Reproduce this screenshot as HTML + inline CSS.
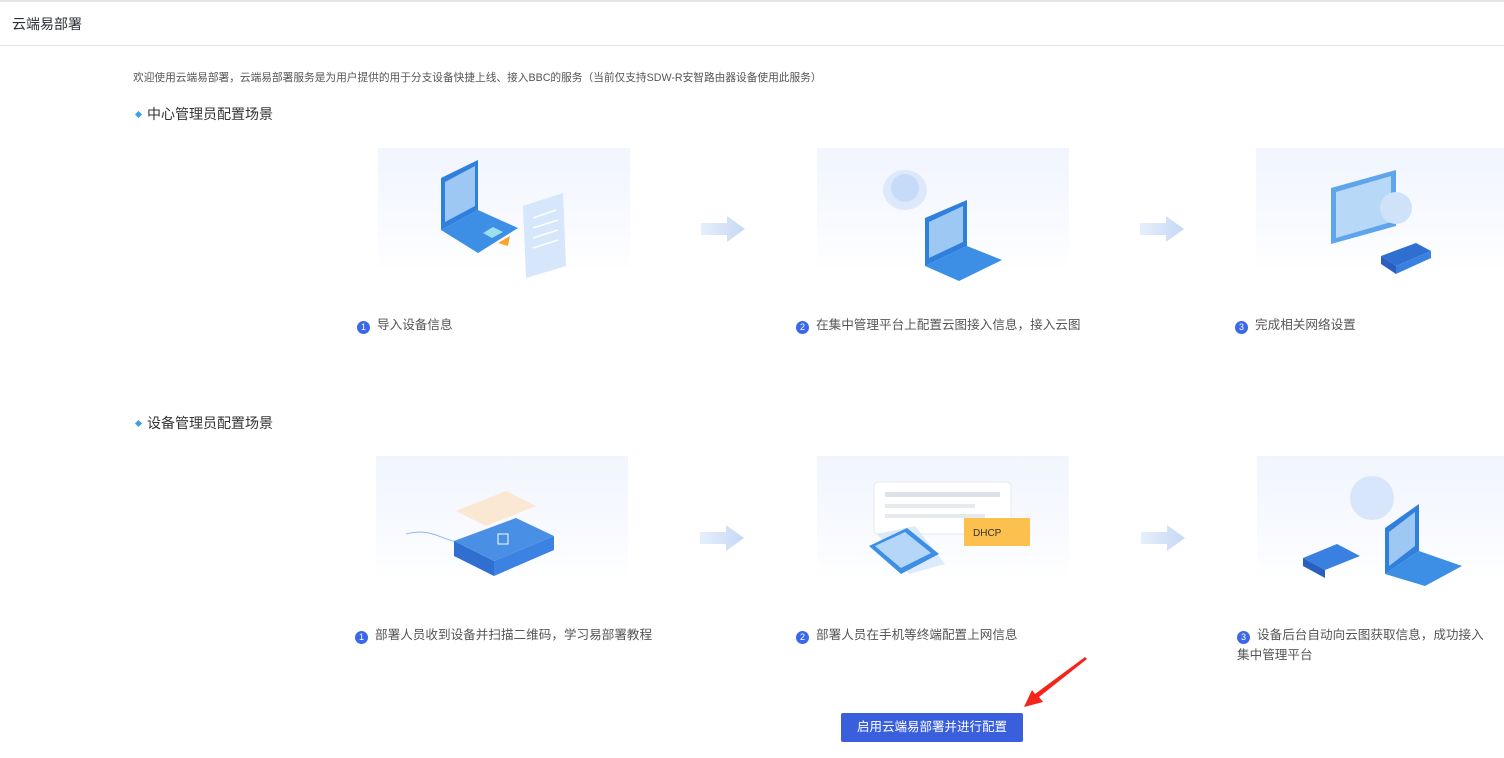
<!DOCTYPE html>
<html><head><meta charset="utf-8"><style>
*{margin:0;padding:0;box-sizing:border-box}
body{width:1504px;height:758px;background:#fff;font-family:"Liberation Sans","Noto Sans CJK SC",sans-serif;position:relative;overflow:hidden;color:#333}
.top{position:absolute;left:0;top:0;width:1504px;height:2px;background:#e4e6ea}
.hdr{position:absolute;left:0;top:2px;width:1504px;height:44px;border-bottom:1px solid #e2e4e8;font-size:14px;line-height:44px;padding-left:12px;color:#2b2f36}
.abs{position:absolute}
.intro{left:133px;top:70px;font-size:10.7px;color:#555;white-space:nowrap}
.sec{font-size:14px;color:#333}
.sec i{display:inline-block;width:5px;height:5px;background:#3aa0e8;transform:rotate(45deg);margin:0 6px 2px 3px;vertical-align:middle}
.panel{position:absolute;width:252px;height:124px;background:linear-gradient(180deg,#f1f5fd 0%,#f8faff 60%,#fff 100%)}
.step{position:absolute;font-size:12.6px;color:#555;line-height:20px}
.step b{display:inline-block;width:13px;height:13px;border-radius:50%;background:#3b68e8;color:#fff;font-size:9px;line-height:13px;text-align:center;font-weight:normal;margin-right:7px;vertical-align:-1px}
.arr{position:absolute;width:44px;height:26px}
.btn{position:absolute;left:841px;top:713px;width:182px;height:29px;background:#3a5fdc;color:#fff;font-size:12.5px;text-align:center;line-height:29px;border-radius:2px}
</style></head><body>
<div class="top"></div>
<div class="hdr">云端易部署</div>
<div class="abs intro">欢迎使用云端易部署，云端易部署服务是为用户提供的用于分支设备快捷上线、接入BBC的服务（当前仅支持SDW-R安智路由器设备使用此服务）</div>
<div class="abs sec" style="left:133px;top:104px"><i></i>中心管理员配置场景</div>
<div class="abs sec" style="left:133px;top:413px"><i></i>设备管理员配置场景</div>

<svg width="0" height="0" style="position:absolute"><defs>
<linearGradient id="ag" x1="0" x2="1"><stop offset="0" stop-color="#e6effb"/><stop offset="1" stop-color="#c6d8f4"/></linearGradient>
</defs></svg>

<div class="panel" style="left:378px;top:148px">
<svg width="252" height="135" viewBox="0 0 252 135">
<polygon points="63,30 100,12 100,62 63,82" fill="#2f7fdc"/><polygon points="67,34 97,18 97,58 67,74" fill="#9cc8f3"/>
<polygon points="63,82 100,62 140,80 100,105" fill="#3d8fe6"/><polygon points="105,85 115,79 125,84 114,90" fill="#9be0f0"/>
<polygon points="145,58 185,45 188,118 148,130" fill="#d2e4fb" opacity=".9"/>
<g stroke="#fff" stroke-width="1.5"><line x1="155" y1="70" x2="178" y2="62"/><line x1="155" y1="80" x2="180" y2="72"/><line x1="155" y1="90" x2="180" y2="82"/><line x1="155" y1="100" x2="180" y2="92"/></g>
<polygon points="120,95 132,88 130,98" fill="#f8a529"/>
</svg></div>
<svg class="arr" style="left:701px;top:216px" viewBox="0 0 44 26"><polygon points="0,7 26,7 26,0 44,13 26,26 26,19 0,19" fill="url(#ag)"/></svg>
<div class="panel" style="left:817px;top:148px">
<svg width="252" height="135" viewBox="0 0 252 135">
<ellipse cx="88" cy="42" rx="22" ry="20" fill="#dde9fb"/><circle cx="88" cy="40" r="14" fill="#c6dbf8"/>
<polygon points="108,70 150,52 150,98 108,118" fill="#2f7fdc"/><polygon points="112,74 146,58 146,94 112,110" fill="#9cc8f3"/>
<polygon points="108,118 150,98 185,112 142,133" fill="#3d8fe6"/>
</svg></div>
<svg class="arr" style="left:1140px;top:216px" viewBox="0 0 44 26"><polygon points="0,7 26,7 26,0 44,13 26,26 26,19 0,19" fill="url(#ag)"/></svg>
<div class="panel" style="left:1256px;top:148px">
<svg width="248" height="135" viewBox="0 0 248 135">
<polygon points="75,40 140,22 140,78 75,96" fill="#5ea5ec"/><polygon points="80,44 135,28 135,74 80,90" fill="#b8d8f8"/>
<circle cx="140" cy="60" r="16" fill="#cfe2fa"/>
<polygon points="125,108 160,95 175,103 140,118" fill="#2f6fd0"/><polygon points="125,108 140,118 140,126 125,116" fill="#2a5fc0"/><polygon points="140,118 175,103 175,110 140,126" fill="#3a80e0"/>
</svg></div>

<div class="step" style="left:357px;top:315px"><b>1</b>导入设备信息</div>
<div class="step" style="left:796px;top:315px"><b>2</b>在集中管理平台上配置云图接入信息，接入云图</div>
<div class="step" style="left:1235px;top:315px"><b>3</b>完成相关网络设置</div>

<div class="panel" style="left:376px;top:456px">
<svg width="252" height="135" viewBox="0 0 252 135">
<polygon points="80,55 130,35 160,50 110,70" fill="#fbe3c8" opacity=".8"/>
<path d="M30 78 C60 70 70 90 90 85" stroke="#8fb6ee" fill="none"/>
<polygon points="78,85 140,62 178,80 118,105" fill="#4a8fe6"/><polygon points="78,85 118,105 118,120 78,100" fill="#2e6fd0"/><polygon points="118,105 178,80 178,94 118,120" fill="#3c82e2"/>
<rect x="122" y="78" width="10" height="10" fill="none" stroke="#fff"/>
</svg></div>
<svg class="arr" style="left:700px;top:525px" viewBox="0 0 44 26"><polygon points="0,7 26,7 26,0 44,13 26,26 26,19 0,19" fill="url(#ag)"/></svg>
<div class="panel" style="left:817px;top:456px">
<svg width="252" height="135" viewBox="0 0 252 135">
<rect x="57" y="26" width="137" height="52" rx="4" fill="#fff" stroke="#e4e8ee"/>
<rect x="68" y="36" width="115" height="5" fill="#dde1e8"/><rect x="68" y="48" width="90" height="4" fill="#e6e9ee"/><rect x="68" y="58" width="100" height="4" fill="#e6e9ee"/>
<rect x="147" y="62" width="66" height="28" fill="#fbc04e"/><text x="156" y="80" font-size="10" fill="#333" font-family="Liberation Sans">DHCP</text>
<polygon points="60,78 98,70 128,108 92,118" fill="#cfe1fa" opacity=".7"/>
<polygon points="52,90 90,72 122,98 84,118" fill="#3d8fe6"/><polygon points="58,90 88,76 114,97 84,112" fill="#b6d6f7"/>
</svg></div>
<svg class="arr" style="left:1141px;top:525px" viewBox="0 0 44 26"><polygon points="0,7 26,7 26,0 44,13 26,26 26,19 0,19" fill="url(#ag)"/></svg>
<div class="panel" style="left:1257px;top:456px">
<svg width="248" height="135" viewBox="0 0 248 135">
<circle cx="115" cy="42" r="22" fill="#d7e6fb"/>
<polygon points="46,102 80,88 103,100 68,114" fill="#3a80e0"/><polygon points="46,102 68,114 68,122 46,110" fill="#2a5fc0"/>
<polygon points="128,72 162,48 162,95 128,118" fill="#2f7fdc"/><polygon points="132,76 158,56 158,90 132,110" fill="#9cc8f3"/>
<polygon points="128,118 162,95 205,110 168,130" fill="#3d8fe6"/>
</svg></div>

<div class="step" style="left:355px;top:625px"><b>1</b>部署人员收到设备并扫描二维码，学习易部署教程</div>
<div class="step" style="left:796px;top:625px"><b>2</b>部署人员在手机等终端配置上网信息</div>
<div class="step" style="left:1237px;top:625px;width:260px"><b>3</b>设备后台自动向云图获取信息，成功接入<br>集中管理平台</div>

<svg class="abs" style="left:1020px;top:655px" width="70" height="55" viewBox="0 0 70 55"><polygon points="65,2 67,4 19,42 23,47 4,52 12,35 15,39" fill="#f5241b"/></svg>
<div class="btn">启用云端易部署并进行配置</div>
</body></html>
